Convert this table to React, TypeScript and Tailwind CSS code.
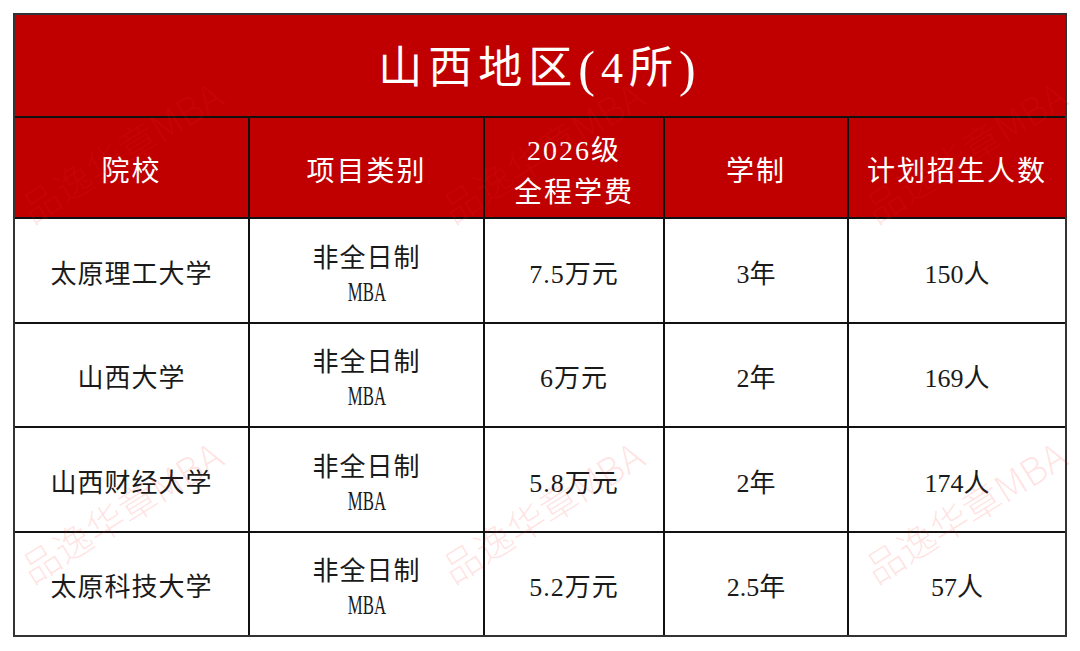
const rows = [
  { school: '太原理工大学', fee: '7.5万元', years: '3年', plan: '150人' },
  { school: '山西大学', fee: '6万元', years: '2年', plan: '169人' },
  { school: '山西财经大学', fee: '5.8万元', years: '2年', plan: '174人' },
  { school: '太原科技大学', fee: '5.2万元', years: '2.5年', plan: '57人' },
];

// watermark centres, tiled like the source image
const marks = [
  'left-[121px] top-[151px]',
  'left-[542px] top-[151px]',
  'left-[965px] top-[151px]',
  'left-[121px] top-[511px]',
  'left-[542px] top-[511px]',
  'left-[965px] top-[511px]',
];

function Watermark({ pos }: { pos: string }) {
  return (
    <div
      className={`pointer-events-none absolute ${pos} -translate-x-1/2 -translate-y-1/2 -rotate-[32deg] whitespace-nowrap font-['Noto_Sans_CJK_SC',sans-serif] text-[38px] font-light leading-none text-[#ff2020]/12`}
    >
      品逸华章MBA
    </div>
  );
}

function HeadCell({ children }: { children: React.ReactNode }) {
  return (
    <div className="flex items-center justify-center bg-[#c00000] pt-[8px] text-center text-[28px] leading-[42px] tracking-[2px] text-white">
      {children}
    </div>
  );
}

function Cell({ children }: { children: React.ReactNode }) {
  return (
    <div className="flex flex-col items-center justify-center bg-white pt-[8px] text-center text-[26px] leading-[34px] text-[#1a1a1a]">
      {children}
    </div>
  );
}

export default function App() {
  return (
    <div className="relative h-[651px] w-[1080px] overflow-hidden bg-white pl-[13px] pt-[13px] font-['Liberation_Serif','Noto_Sans_CJK_SC',serif]">
      <div className="grid w-[1054px] grid-cols-[233px_233px_178px_182px_216px] grid-rows-[101px_99px_103px_102px_103px_102px] gap-[2px] border-2 border-[#333] bg-[#111]">
        <div className="col-span-5 flex items-center justify-center bg-[#c00000] pt-[6px] text-[44px] tracking-[6px] text-white">
          山西地区<span className="text-[50px] leading-none">(</span>4所<span className="text-[50px] leading-none">)</span>
        </div>

        <HeadCell>院校</HeadCell>
        <HeadCell>项目类别</HeadCell>
        <HeadCell>
          <div>
            <div>2026级</div>
            <div>全程学费</div>
          </div>
        </HeadCell>
        <HeadCell>学制</HeadCell>
        <HeadCell>计划招生人数</HeadCell>

        {rows.map((r) => (
          <>
            <Cell key={r.school + 'a'}>
              <span className="tracking-[1px]">{r.school}</span>
            </Cell>
            <Cell key={r.school + 'b'}>
              <span className="tracking-[1px]">非全日制</span>
              <span className="inline-block scale-x-[0.6] text-[28px] leading-[32px]">MBA</span>
            </Cell>
            <Cell key={r.school + 'c'}>
              <span className="tracking-[1px]">{r.fee}</span>
            </Cell>
            <Cell key={r.school + 'd'}>
              <span>{r.years}</span>
            </Cell>
            <Cell key={r.school + 'e'}>
              <span>{r.plan}</span>
            </Cell>
          </>
        ))}
      </div>

      {marks.map((m) => (
        <Watermark key={m} pos={m} />
      ))}
    </div>
  );
}
